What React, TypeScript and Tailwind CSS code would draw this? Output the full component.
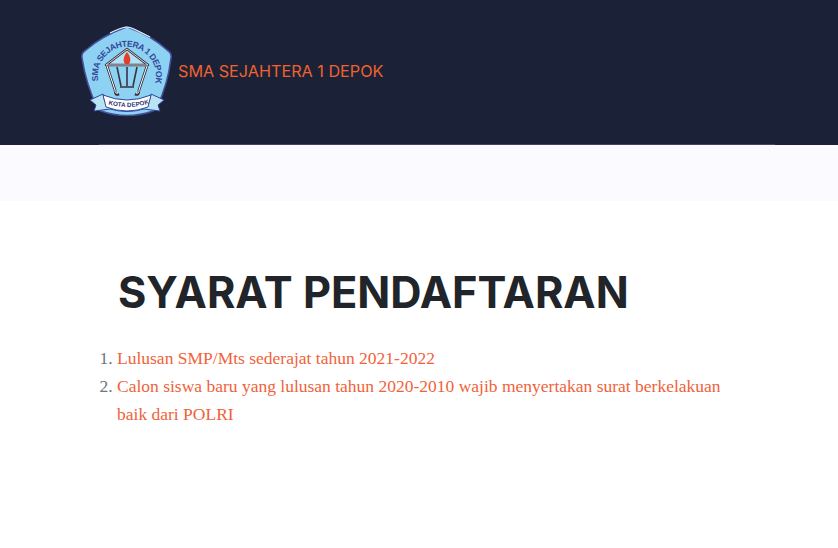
export default function App() {
  return (
    <div className="min-h-[548px] bg-white overflow-hidden">
      <header className="h-[144px] bg-[#1b2136] flex items-center pl-[80px] pb-[2px]">
        <svg width="94" height="94" viewBox="0 0 94 94" className="shrink-0">
          <defs>
            <path id="arc" d="M18.5 57 A29 29 0 1 1 75.5 57" />
            <path id="ribbon" d="M21 76 Q47 86 73 76" />
          </defs>
          <path d="M44 4 Q47 2 50 4 Q72 12 87 26 Q92 29 91 34 Q88 60 77 83 Q76 86 73 87 Q47 96 21 87 Q18 86 17 83 Q6 60 2 34 Q1 29 6 26 Q22 12 44 4 Z" fill="#8dd2f2" stroke="#46509f" strokeWidth="1.6" />
          <path d="M30 9 Q40 4 46 3 Q50 3 54 5 L70 13" fill="none" stroke="#e6f6fd" strokeWidth="1.2" />
          <text fontSize="8.6" fontWeight="700" fill="#34479a" fontFamily="Liberation Sans, sans-serif">
            <textPath href="#arc" startOffset="0" textLength="104">SMA SEJAHTERA 1 DEPOK</textPath>
          </text>
          <path d="M47 25 L68 41 L26 41 Z" fill="#b4e2f5" stroke="#3a3340" strokeWidth="2.4" strokeLinejoin="round" />
          <path d="M47 25 L68 41 L26 41 Z" fill="none" stroke="#f2fafd" strokeWidth="0.8" strokeLinejoin="round" />
          <path d="M27 42 L35 66 Q35 72 39 70 M67 42 L59 66 Q59 72 55 70" stroke="#3a3340" strokeWidth="2.6" fill="none" />
          <path d="M27 42 L35 66 Q35 70 38 69 M67 42 L59 66 Q59 70 56 69" stroke="#f2fafd" strokeWidth="1" fill="none" />
          <path d="M37 43 L41 62 M57 43 L53 62 M47 43 L47 62 M40 63 L54 63" stroke="#3a3340" strokeWidth="1.6" fill="none" />
          <path d="M47 28 C43 33 43 37 45 40 L49 40 C51 37 51 33 47 28 Z" fill="#e23f2b" />
          <path d="M10 76 L23 70 L25 78 Q47 86 69 78 L71 70 L84 76 L78 81 L80 87 L64 85 Q47 90 30 85 L14 87 L16 81 Z" fill="#b9e4f6" stroke="#34479a" strokeWidth="1" strokeLinejoin="round" />
          <path d="M23 71 Q47 81 71 71 L68 83 Q47 91 26 83 Z" fill="#ffffff" stroke="#34479a" strokeWidth="1" />
          <text fontSize="6.2" fontWeight="700" fill="#27306f" fontFamily="Liberation Sans, sans-serif" dy="2">
            <textPath href="#ribbon" startOffset="8">KOTA DEPOK</textPath>
          </text>
        </svg>
        <span className="ml-[4px] text-[#f0622f] text-[16.2px] font-['Inter',sans-serif]">SMA SEJAHTERA 1 DEPOK</span>
      </header>
      <div className="h-px bg-[#1b2136] pl-[99px] pr-[63px]">
        <div className="h-px bg-[#45445c]" />
      </div>
      <div className="h-[56px] bg-[#fafaff]" />
      <main className="pl-[117px] pr-[100px]">
        <h1 className="mt-[63px] ml-px text-[#212529] text-[43.3px] leading-[56px] font-bold font-['Inter',sans-serif]">SYARAT PENDAFTARAN</h1>
        <ol className="mt-[24px] list-decimal text-[17.5px] leading-[28px] text-[#6c757d] font-['Liberation_Serif',serif]">
          <li><span className="text-[#f0623a]">Lulusan SMP/Mts sederajat tahun 2021-2022</span></li>
          <li><span className="text-[#f0623a]">Calon siswa baru yang lulusan tahun 2020-2010 wajib menyertakan surat berkelakuan baik dari POLRI</span></li>
        </ol>
      </main>
    </div>
  );
}
